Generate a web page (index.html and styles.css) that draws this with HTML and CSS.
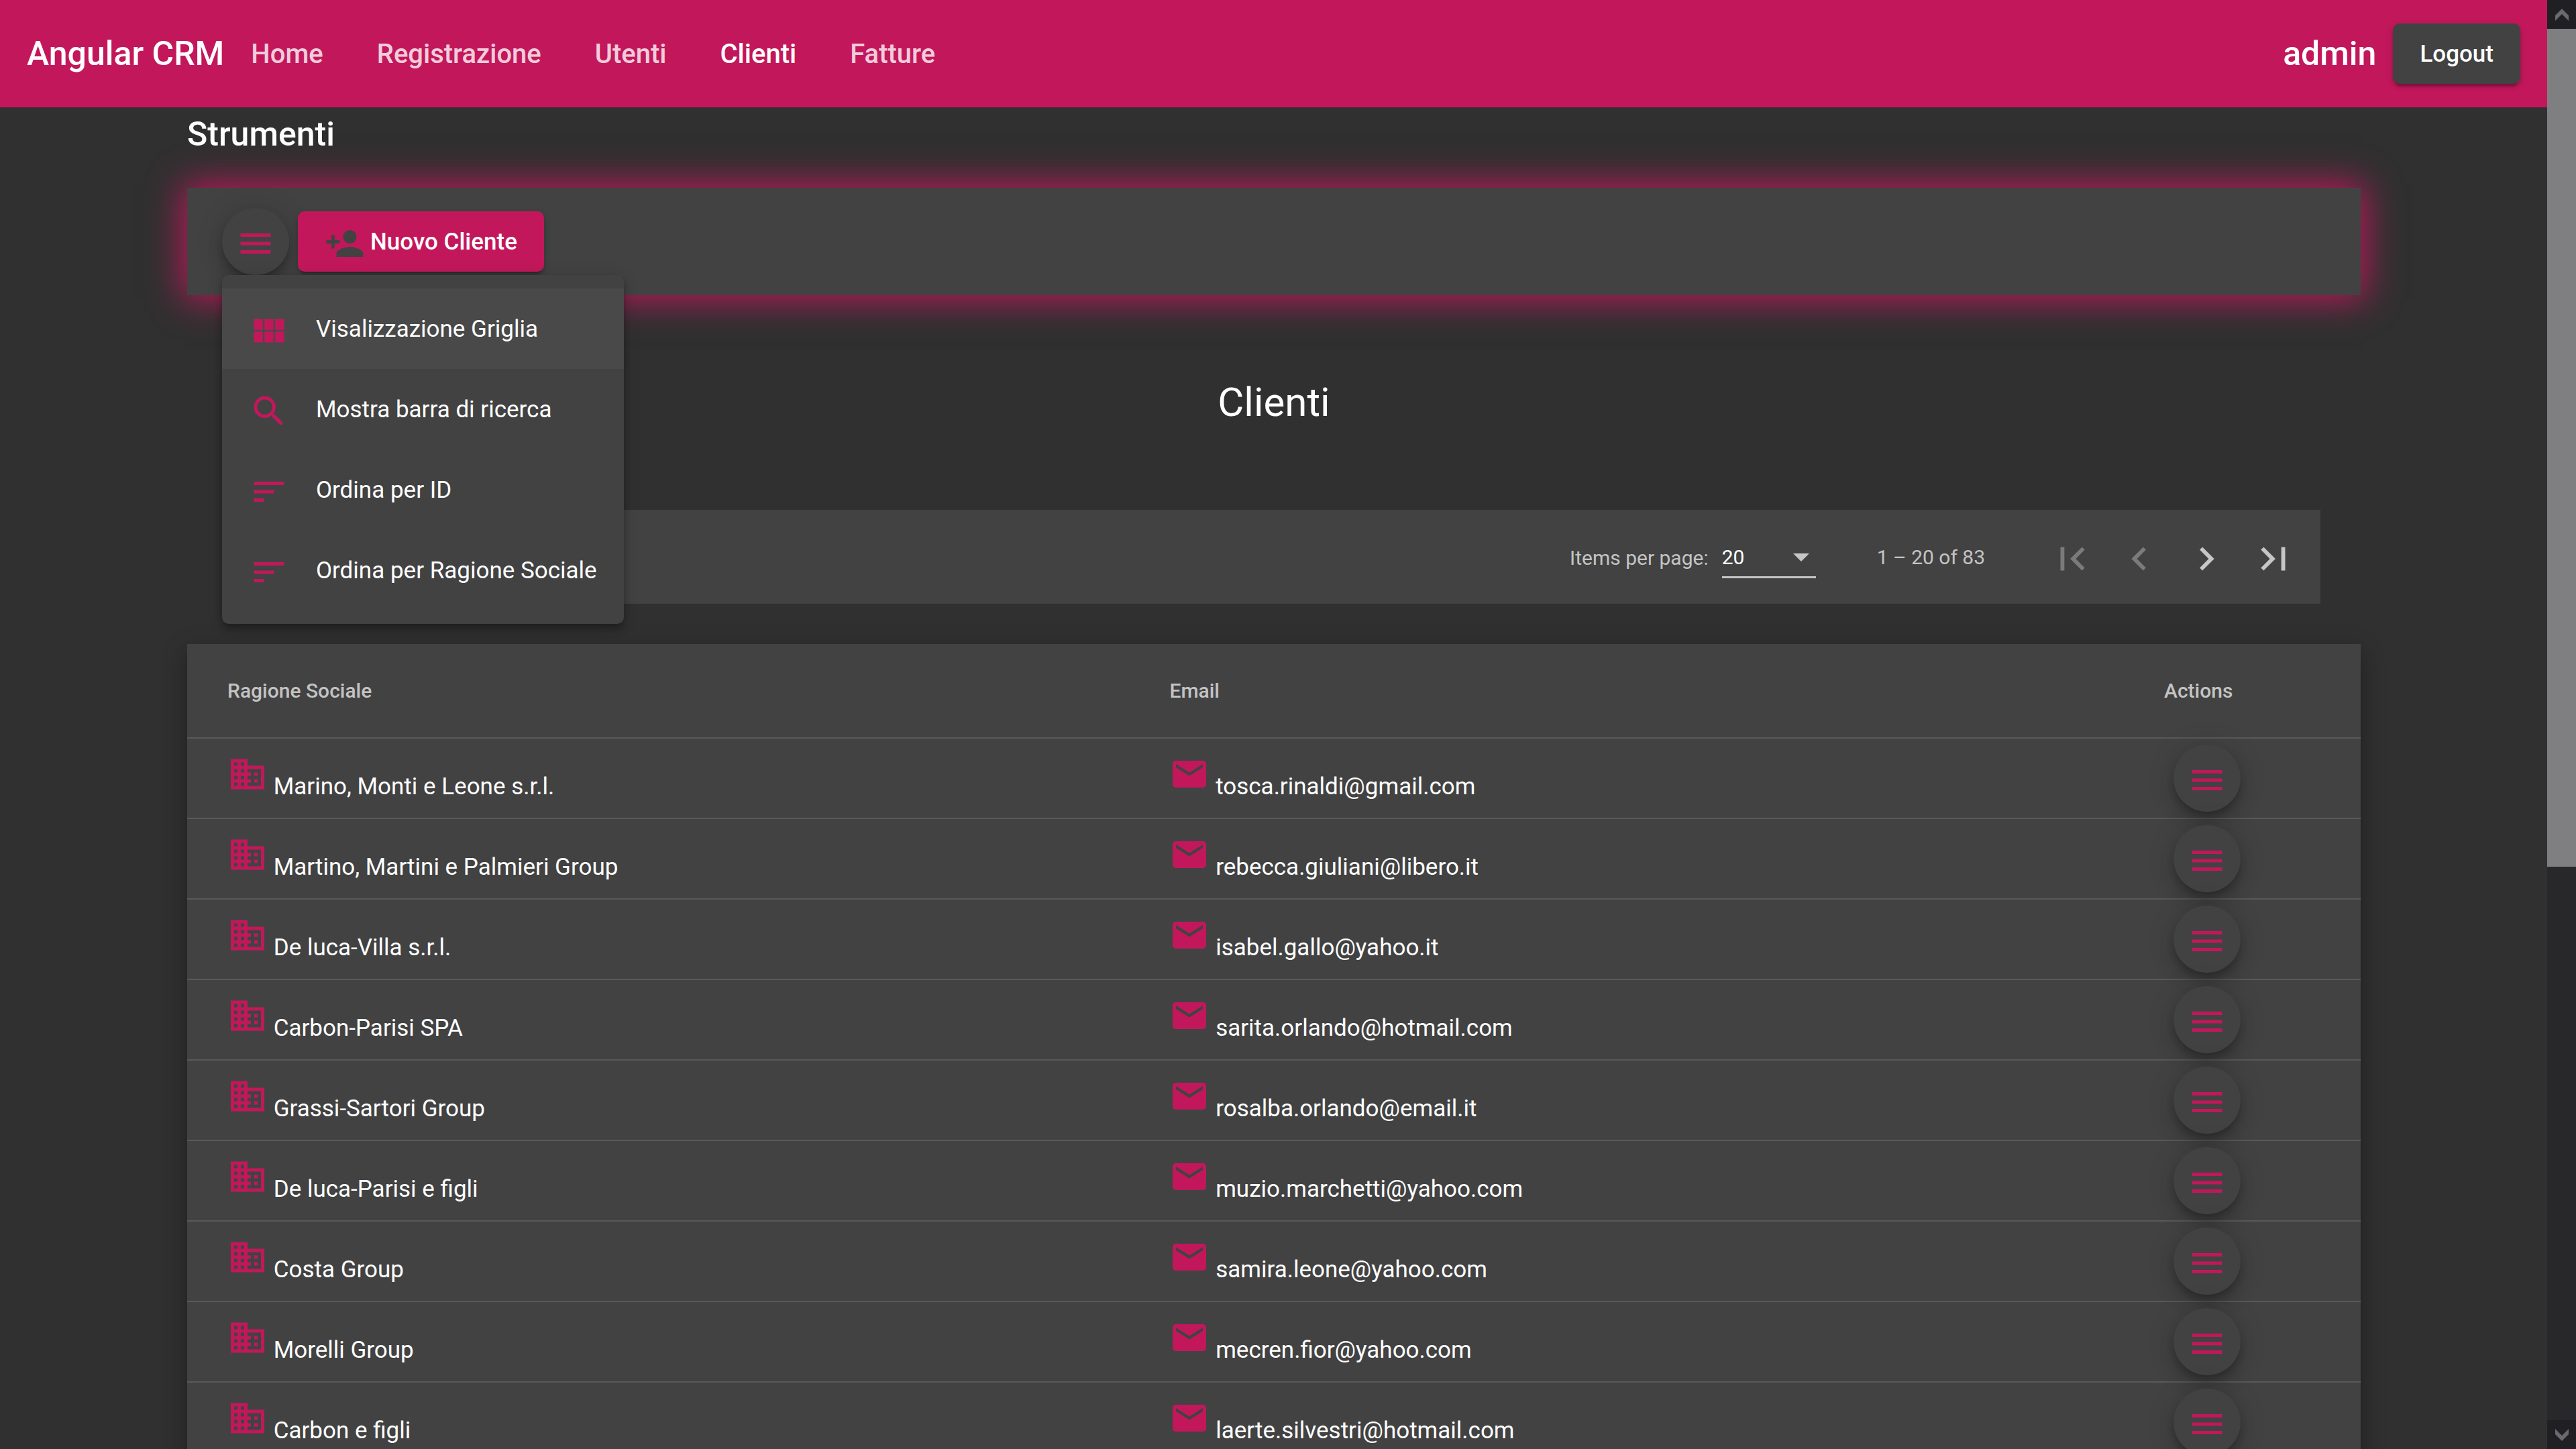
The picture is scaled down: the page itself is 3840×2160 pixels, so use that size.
FILE: index.html
```html
<!DOCTYPE html>
<html lang="it">
<head>
<meta charset="utf-8">
<title>Angular CRM</title>
<link rel="stylesheet" href="styles.css">
</head>
<body>
<svg class="sprite" aria-hidden="true">
  <symbol id="i-menu" viewBox="0 0 24 24"><path d="M3 18h18v-2H3v2zm0-5h18v-2H3v2zm0-7v2h18V6H3z"/></symbol>
  <symbol id="i-person-add" viewBox="0 0 24 24"><path d="M15 12c2.21 0 4-1.79 4-4s-1.79-4-4-4-4 1.79-4 4 1.790 4 4 4zm-9-2V7H4v3H1v2h3v3h2v-3h3v-2H6zm9 4c-2.670 0-8 1.340-8 4v2h16v-2c0-2.660-5.330-4-8-4z"/></symbol>
  <symbol id="i-grid" viewBox="0 0 24 24"><path d="M14.670 5v6.500H9.330V5h5.340zm1 6.500H21V5h-5.330v6.500zm-1 7.500v-6.500H9.330V19h5.340zm1-6.500V19H21v-6.500h-5.330zm-7.340 0H3V19h5.330v-6.500zm0-1V5H3v6.500h5.330z"/></symbol>
  <symbol id="i-search" viewBox="0 0 24 24"><path d="M15.500 14h-.79l-.28-.27C15.410 12.590 16 11.110 16 9.500 16 5.910 13.090 3 9.500 3S3 5.910 3 9.500 5.910 16 9.500 16c1.610 0 3.090-.59 4.230-1.570l.27.28v.79l5 4.990L20.490 19l-4.990-5zm-6 0C7.010 14 5 11.990 5 9.500S7.010 5 9.500 5 14 7.010 14 9.500 11.990 14 9.500 14z"/></symbol>
  <symbol id="i-sort" viewBox="0 0 24 24"><path d="M3 18h6v-2H3v2zM3 6v2h18V6H3zm0 7h12v-2H3v2z"/></symbol>
  <symbol id="i-domain" viewBox="0 0 24 24"><path d="M12 7V3H2v18h20V7H12zM6 19H4v-2h2v2zm0-4H4v-2h2v2zm0-4H4V9h2v2zm0-4H4V5h2v2zm4 12H8v-2h2v2zm0-4H8v-2h2v2zm0-4H8V9h2v2zm0-4H8V5h2v2zm10 12h-8v-2h2v-2h-2v-2h2v-2h-2V9h8v10zm-2-8h-2v2h2v-2zm0 4h-2v2h2v-2z"/></symbol>
  <symbol id="i-mail" viewBox="0 0 24 24"><path d="M20 4H4c-1.100 0-1.990.9-1.990 2L2 18c0 1.100.9 2 2 2h16c1.100 0 2-.9 2-2V6c0-1.100-.9-2-2-2zm0 4l-8 5-8-5V6l8 5 8-5v2z"/></symbol>
  <symbol id="i-first" viewBox="0 0 24 24"><path d="M18.410 16.590L13.820 12l4.590-4.590L17 6l-6 6 6 6zM6 6h2v12H6z"/></symbol>
  <symbol id="i-prev" viewBox="0 0 24 24"><path d="M15.410 7.410L14 6l-6 6 6 6 1.410-1.410L10.830 12z"/></symbol>
  <symbol id="i-next" viewBox="0 0 24 24"><path d="M10 6L8.590 7.410 13.170 12l-4.580 4.590L10 18l6-6z"/></symbol>
  <symbol id="i-last" viewBox="0 0 24 24"><path d="M5.590 7.410L10.180 12l-4.590 4.590L7 18l6-6-6-6zM16 6h2v12h-2z"/></symbol>
</svg>

<header class="navbar">
  <a class="brand" href="#">Angular CRM</a>
  <nav class="nav">
    <a class="nav-link" href="#">Home</a>
    <a class="nav-link" href="#">Registrazione</a>
    <a class="nav-link" href="#">Utenti</a>
    <a class="nav-link active" href="#" aria-current="page">Clienti</a>
    <a class="nav-link" href="#">Fatture</a>
  </nav>
  <span class="user">admin</span>
  <button class="btn btn-dark" type="button">Logout</button>
</header>

<main class="container">
  <h2 class="section-title">Strumenti</h2>
  <div class="toolbar">
    <button class="fab" type="button" aria-label="Menu strumenti" aria-expanded="true"><svg class="icon"><use href="#i-menu"/></svg></button>
    <button class="btn btn-primary" type="button"><svg class="icon"><use href="#i-person-add"/></svg>Nuovo Cliente</button>
    <div class="menu" role="menu">
      <button class="menu-item highlighted" type="button" role="menuitem"><svg class="icon"><use href="#i-grid"/></svg>Visalizzazione Griglia</button>
      <button class="menu-item" type="button" role="menuitem"><svg class="icon"><use href="#i-search"/></svg>Mostra barra di ricerca</button>
      <button class="menu-item" type="button" role="menuitem"><svg class="icon"><use href="#i-sort"/></svg>Ordina per ID</button>
      <button class="menu-item" type="button" role="menuitem"><svg class="icon"><use href="#i-sort"/></svg>Ordina per Ragione Sociale</button>
    </div>
  </div>

  <h1 class="page-title">Clienti</h1>

  <div class="paginator">
    <label class="page-label" for="page-size">Items per page:</label>
    <div class="select-field">
      <select id="page-size" class="select"><option>10</option><option selected>20</option><option>50</option></select>
      <span class="select-arrow"></span>
    </div>
    <span class="range">1 – 20 of 83</span>
    <button class="page-btn" type="button" aria-label="Prima pagina" disabled><svg class="page-icon"><use href="#i-first"/></svg></button>
    <button class="page-btn" type="button" aria-label="Pagina precedente" disabled><svg class="page-icon"><use href="#i-prev"/></svg></button>
    <button class="page-btn" type="button" aria-label="Pagina successiva"><svg class="page-icon"><use href="#i-next"/></svg></button>
    <button class="page-btn" type="button" aria-label="Ultima pagina"><svg class="page-icon"><use href="#i-last"/></svg></button>
  </div>

  <table class="table">
    <thead>
      <tr><th class="col-name">Ragione Sociale</th><th class="col-email">Email</th><th class="col-actions">Actions</th></tr>
    </thead>
    <tbody>
      <tr><td><svg class="cell-icon"><use href="#i-domain"/></svg> Marino, Monti e Leone s.r.l.</td><td><svg class="cell-icon"><use href="#i-mail"/></svg> tosca.rinaldi@gmail.com</td><td><button class="fab" type="button" aria-label="Azioni"><svg class="icon"><use href="#i-menu"/></svg></button></td></tr>
      <tr><td><svg class="cell-icon"><use href="#i-domain"/></svg> Martino, Martini e Palmieri Group</td><td><svg class="cell-icon"><use href="#i-mail"/></svg> rebecca.giuliani@libero.it</td><td><button class="fab" type="button" aria-label="Azioni"><svg class="icon"><use href="#i-menu"/></svg></button></td></tr>
      <tr><td><svg class="cell-icon"><use href="#i-domain"/></svg> De luca-Villa s.r.l.</td><td><svg class="cell-icon"><use href="#i-mail"/></svg> isabel.gallo@yahoo.it</td><td><button class="fab" type="button" aria-label="Azioni"><svg class="icon"><use href="#i-menu"/></svg></button></td></tr>
      <tr><td><svg class="cell-icon"><use href="#i-domain"/></svg> Carbon-Parisi SPA</td><td><svg class="cell-icon"><use href="#i-mail"/></svg> sarita.orlando@hotmail.com</td><td><button class="fab" type="button" aria-label="Azioni"><svg class="icon"><use href="#i-menu"/></svg></button></td></tr>
      <tr><td><svg class="cell-icon"><use href="#i-domain"/></svg> Grassi-Sartori Group</td><td><svg class="cell-icon"><use href="#i-mail"/></svg> rosalba.orlando@email.it</td><td><button class="fab" type="button" aria-label="Azioni"><svg class="icon"><use href="#i-menu"/></svg></button></td></tr>
      <tr><td><svg class="cell-icon"><use href="#i-domain"/></svg> De luca-Parisi e figli</td><td><svg class="cell-icon"><use href="#i-mail"/></svg> muzio.marchetti@yahoo.com</td><td><button class="fab" type="button" aria-label="Azioni"><svg class="icon"><use href="#i-menu"/></svg></button></td></tr>
      <tr><td><svg class="cell-icon"><use href="#i-domain"/></svg> Costa Group</td><td><svg class="cell-icon"><use href="#i-mail"/></svg> samira.leone@yahoo.com</td><td><button class="fab" type="button" aria-label="Azioni"><svg class="icon"><use href="#i-menu"/></svg></button></td></tr>
      <tr><td><svg class="cell-icon"><use href="#i-domain"/></svg> Morelli Group</td><td><svg class="cell-icon"><use href="#i-mail"/></svg> mecren.fior@yahoo.com</td><td><button class="fab" type="button" aria-label="Azioni"><svg class="icon"><use href="#i-menu"/></svg></button></td></tr>
      <tr><td><svg class="cell-icon"><use href="#i-domain"/></svg> Carbon e figli</td><td><svg class="cell-icon"><use href="#i-mail"/></svg> laerte.silvestri@hotmail.com</td><td><button class="fab" type="button" aria-label="Azioni"><svg class="icon"><use href="#i-menu"/></svg></button></td></tr>
    </tbody>
  </table>
</main>

<div class="scrollbar" aria-hidden="true">
  <div class="scroll-end"><svg class="scroll-arrow" viewBox="0 0 20 18"><path d="M0 10L10 0l10 10v8L10 8 0 18z"/></svg></div>
  <div class="scroll-track"><div class="scroll-thumb"></div></div>
  <div class="scroll-end"><svg class="scroll-arrow" viewBox="0 0 20 18"><path d="M0 8l10 10L20 8V0L10 10 0 0z"/></svg></div>
</div>
</body>
</html>
```

FILE: styles.css
```css
:root {
  --pink: #c2185b;
  --surface: #424242;
  --page: #303030;
  --muted: rgba(255, 255, 255, 0.7);
  --raised: 0 8px 3px -5px rgba(0, 0, 0, 0.2), 0 5px 5px rgba(0, 0, 0, 0.14), 0 3px 12px rgba(0, 0, 0, 0.12);
}

* { box-sizing: border-box; }

body {
  margin: 0;
  padding-right: 43px;
  height: 100vh;
  overflow: hidden;
  background: var(--page);
  color: #fff;
  font-family: Roboto, "Liberation Sans", sans-serif;
  font-size: 35px;
}

button, select { font: inherit; color: inherit; border: 0; background: none; }

.sprite { display: none; }

.icon { width: 60px; height: 60px; flex: none; fill: var(--pink); margin-top: 5px; }

/* Top bar */
.navbar {
  display: flex;
  align-items: center;
  height: 160px;
  padding: 0 40px;
  background: var(--pink);
}
.brand { color: #fff; font-size: 50px; font-weight: 500; text-decoration: none; }
.nav { display: flex; flex: 1; }
.nav-link {
  padding: 0 40px;
  color: rgba(255, 255, 255, 0.8);
  font-size: 40px;
  font-weight: 500;
  text-decoration: none;
}
.nav-link.active { color: #fff; }
.user { margin-right: 25px; font-size: 50px; font-weight: 500; }

.btn {
  display: flex;
  align-items: center;
  gap: 8px;
  height: 90px;
  padding: 0 40px;
  border-radius: 10px;
  font-weight: 500;
  box-shadow: var(--raised);
}
.btn-dark { background: var(--surface); }
.btn-primary { background: var(--pink); }
.btn-primary .icon { fill: var(--surface); }

.fab {
  display: flex;
  align-items: center;
  justify-content: center;
  width: 100px;
  height: 100px;
  padding: 0;
  border-radius: 50%;
  background: var(--surface);
  box-shadow: 0 8px 12px -2px rgba(0, 0, 0, 0.2), 0 15px 25px rgba(0, 0, 0, 0.14), 0 2px 45px rgba(0, 0, 0, 0.12);
}

/* Content */
.container { padding: 0 278px 0 279px; }
.section-title { margin: 0 0 40px; font-size: 50px; line-height: 80px; font-weight: 500; }

.toolbar {
  position: relative;
  display: flex;
  align-items: center;
  gap: 13px;
  height: 160px;
  padding: 0 52px;
  background: var(--surface);
  box-shadow: 0 0 50px 5px var(--pink);
}

.menu {
  position: absolute;
  top: 130px;
  left: 52px;
  z-index: 1;
  padding: 20px 0;
  border-radius: 10px;
  background: var(--surface);
  box-shadow: 0 5px 10px -2px rgba(0, 0, 0, 0.2), 0 10px 12px rgba(0, 0, 0, 0.14), 0 2px 25px rgba(0, 0, 0, 0.12);
}
.menu-item {
  display: flex;
  align-items: center;
  gap: 40px;
  width: 100%;
  height: 120px;
  padding: 0 40px;
  white-space: nowrap;
}
.menu-item.highlighted { background: rgba(255, 255, 255, 0.04); }

.page-title { margin: 120px 0; font-size: 60px; line-height: 80px; font-weight: 400; text-align: center; }

.paginator {
  display: flex;
  align-items: center;
  justify-content: flex-end;
  height: 140px;
  margin: 0 60px 60px;
  padding-right: 20px;
  background: var(--surface);
  color: var(--muted);
  font-size: 30px;
}
.page-label { padding-top: 2px; }
.select-field { position: relative; width: 140px; margin: 0 31px 0 20px; }
.select {
  display: block;
  width: 100%;
  height: 64px;
  padding: 4px 0 0;
  appearance: none;
  border-bottom: 3px solid #c6c6c6;
  border-radius: 0;
  color: #fff;
}
.select-arrow {
  position: absolute;
  top: 27px;
  right: 10px;
  border: 12px solid transparent;
  border-top-color: #c6c6c6;
  border-bottom: 0;
  pointer-events: none;
}
.range { margin: 0 80px 0 60px; }
.page-btn { width: 100px; height: 100px; padding: 5px 0 0; color: #c6c6c6; }
.page-btn:disabled { color: #7b7b7b; }
.page-icon { display: block; width: 70px; height: 70px; margin: auto; fill: currentColor; }

/* Customer list */
.table {
  width: 100%;
  table-layout: fixed;
  border-collapse: separate;
  border-spacing: 0;
  background: var(--surface);
  box-shadow: 0 12px 12px -8px rgba(0, 0, 0, 0.2), 0 20px 25px 2px rgba(0, 0, 0, 0.14), 0 8px 35px 5px rgba(0, 0, 0, 0.12);
}
.table th, .table td { padding: 0; border-bottom: 2px solid #595959; text-align: left; vertical-align: middle; }
.table th { height: 141px; color: var(--muted); font-size: 30px; font-weight: 500; }
.table td { height: 120px; padding-bottom: 4px; }
.table th:first-child, .table td:first-child { padding-left: 60px; }
.table td:last-child { padding: 0 0 0 14px; }
.col-name { width: 45.2%; }
.col-actions { width: 293px; }
.cell-icon { width: 60px; height: 60px; fill: var(--pink); }

/* Window scrollbar */
.scrollbar {
  position: fixed;
  inset: 0 0 0 auto;
  display: flex;
  flex-direction: column;
  width: 43px;
  background: #28282a;
}
.scroll-end { display: flex; align-items: center; justify-content: center; height: 43px; background: #202024; }
.scroll-track { flex: 1; }
.scroll-thumb { height: 60.2%; background: #7f7f81; }
.scroll-arrow { width: 20px; height: 18px; fill: #6a6a6d; }
```
